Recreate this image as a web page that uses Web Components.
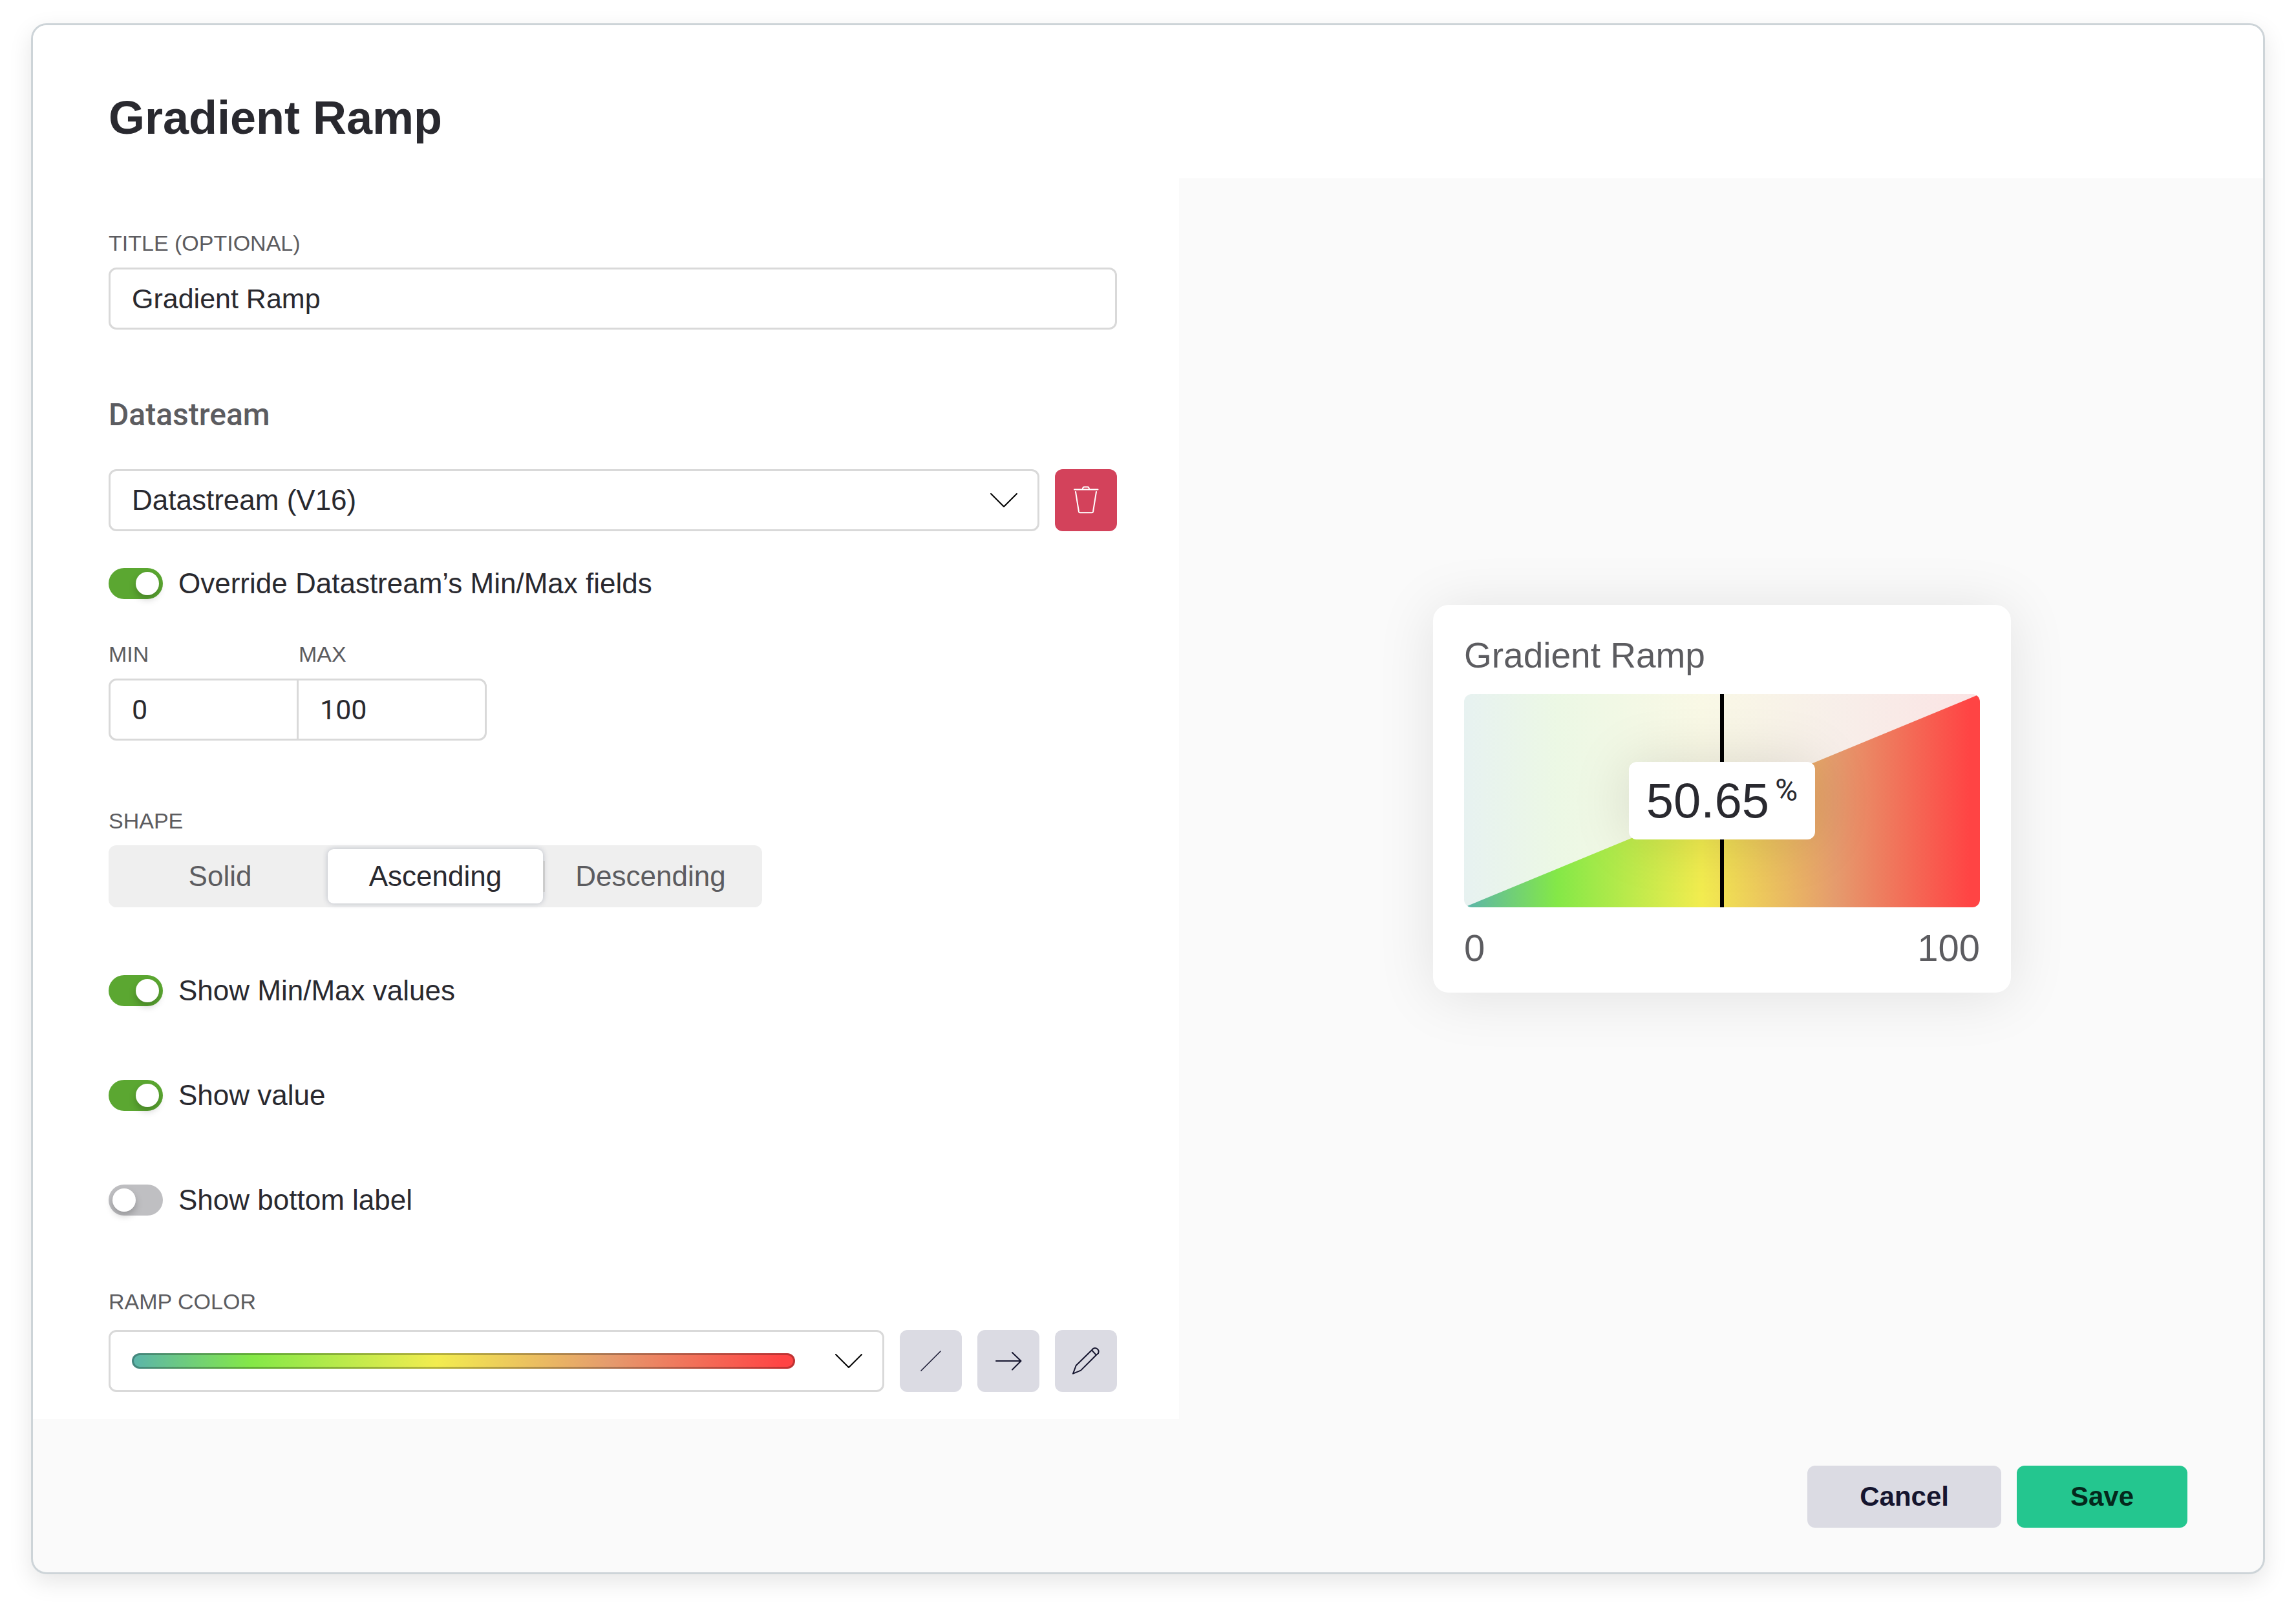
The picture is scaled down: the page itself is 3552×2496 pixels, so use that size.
<!DOCTYPE html>
<html lang="en">
<head>
<meta charset="utf-8">
<title>Gradient Ramp</title>
<style>
  html, body { height: 100%; }
  body {
    margin: 0;
    box-sizing: border-box;
    padding: 36px 48px 60px;
    background: #fff;
    color: #29292f;
    font-family: "Liberation Sans", Arial, sans-serif;
    font-size: 44px;
    line-height: 48px;
    --muted: #5c5c60;
    --line: #d9d9d9;
    --ramp: linear-gradient(90deg, #5bb4ab 0%, #84e847 18%, #f2ec4f 46%, #e59b6d 72%, #ff4444 98%);
  }
</style>
</head>
<body>
<settings-dialog heading="Gradient Ramp">
  <text-field slot="form" label="TITLE (OPTIONAL)" value="Gradient Ramp"></text-field>
  <datastream-section slot="form"></datastream-section>
  <segmented-control slot="form" label="SHAPE" options="Solid,Ascending,Descending" selected="1"></segmented-control>
  <toggle-list slot="form">
    <toggle-switch checked>Show Min/Max values</toggle-switch>
    <toggle-switch checked>Show value</toggle-switch>
    <toggle-switch>Show bottom label</toggle-switch>
  </toggle-list>
  <ramp-color slot="form" label="RAMP COLOR"></ramp-color>
  <ramp-widget slot="preview" heading="Gradient Ramp" value="50.65" unit="%" min="0" max="100"></ramp-widget>
  <action-button slot="actions" kind="secondary">Cancel</action-button>
  <action-button slot="actions" kind="primary">Save</action-button>
</settings-dialog>

<script>
const base = `
  *, *::before, *::after { box-sizing: border-box; }
  input, select, button { font: inherit; color: inherit; margin: 0; }
  .label { display: block; font-size: 34px; line-height: 44px; color: var(--muted); }
  .box { width: 100%; height: 96px; padding: 0 33px; border: 3px solid var(--line); border-radius: 12px; background: #fff; }
`;

function define(name, render) {
  customElements.define(name, class extends HTMLElement {
    connectedCallback() {
      if (this.shadowRoot) return;
      const root = this.attachShadow({ mode: 'open' });
      root.innerHTML = render(this);
    }
  });
}

const attr = (el, key) => el.getAttribute(key) || '';

define('settings-dialog', el => `
  <style>${base}
    :host { display: grid; grid-template: auto 1fr auto / 1773fr 1677fr; height: 100%; box-sizing: border-box;
      border: 3px solid #cdd4d8; border-radius: 24px; overflow: hidden; background: #fafafa;
      box-shadow: 0 12px 36px rgba(0,0,0,.1); }
    header { grid-column: 1 / -1; background: #fff; padding: 103px 117px 54px; }
    h1 { margin: 0; font-size: 72px; line-height: 80px; font-weight: 700; }
    .form { background: #fff; padding: 78px 96px 42px 117px; display: flex; flex-direction: column; }
    .preview { display: flex; align-items: center; justify-content: center; padding-left: 3px; }
    footer { grid-column: 1 / -1; display: flex; justify-content: flex-end; gap: 24px; padding: 72px 117px 69px; }
  </style>
  <header><h1>${attr(el, 'heading')}</h1></header>
  <main class="form"><slot name="form"></slot></main>
  <aside class="preview"><slot name="preview"></slot></aside>
  <footer><slot name="actions"></slot></footer>
`);

define('text-field', el => `
  <style>${base}
    :host { display: block; }
    .label { margin-bottom: 16px; }
    input { font-size: 43px; }
  </style>
  <label class="label" for="f">${attr(el, 'label')}</label>
  <input class="box" id="f" type="text" value="${attr(el, 'value')}">
`);

const icons = {
  chevron: '<path d="M4 14 24 34 44 14" stroke-width="2"/>',
  trash: '<path d="M6 7.500H42.500M18.500 7.500 19.500 4.500Q20.300 3.500 21.500 3.500H26.500Q27.700 3.500 28.300 4.500L29.500 7.500M8 11 13 42Q13.300 43.300 14.500 43.300H33.500Q34.700 43.300 35 42L40 11" stroke-width="2"/>',
  slash: '<path d="M9 39 39 9" stroke-width="1.500"/>',
  arrow: '<path d="M5 24H43M30 11 43.500 24 30 37.500" stroke-width="2"/>',
  pencil: '<path d="M4 43.700 8.700 31 33 7.300 35 5A5.600 5.600 0 0 1 43 12.200L39.700 15 16 38.600ZM33 7.300 39.700 14.600" stroke-width="2"/>'
};

define('line-icon', el => `
  <style>
    :host { display: block; width: 48px; height: 48px; flex: none; pointer-events: none; }
    svg { display: block; width: 100%; height: 100%; fill: none; stroke: currentColor; stroke-linecap: round; stroke-linejoin: round; }
  </style>
  <svg viewBox="0 0 48 48" aria-hidden="true">${icons[attr(el, 'name')]}</svg>
`);

define('icon-button', el => `
  <style>${base}
    :host { display: block; flex: none; }
    button { display: flex; align-items: center; justify-content: center; width: 96px; height: 96px; padding: 0;
      border: 0; border-radius: 12px; background: var(--bg, #dbdbe3); color: var(--fg, #15152f); }
  </style>
  <button type="button" aria-label="${attr(el, 'label')}"><line-icon name="${attr(el, 'icon')}"></line-icon></button>
`);

define('toggle-switch', el => `
  <style>${base}
    :host { display: block; }
    label { display: flex; align-items: center; gap: 24px; }
    input { appearance: none; flex: none; width: 84px; height: 48px; padding: 6px; border-radius: 24px; background: #bfbfc2; display: flex; }
    input::before { content: ""; width: 36px; height: 36px; border-radius: 50%; background: #fff; box-shadow: 0 6px 12px rgba(0,0,0,.22); }
    input:checked { background: #5ba731; justify-content: flex-end; }
  </style>
  <label><input type="checkbox" role="switch" ${el.hasAttribute('checked') ? 'checked' : ''}><span><slot></slot></span></label>
`);

define('toggle-list', () => `
  <style>
    :host { display: flex; flex-direction: column; gap: 114px; margin-top: 105px; }
  </style>
  <slot></slot>
`);

define('datastream-section', () => `
  <style>${base}
    :host { display: block; margin-top: 102px; }
    h2 { margin: 0 0 54px; font: 500 48px/60px Roboto, sans-serif; color: var(--muted); }
    .row { display: flex; gap: 24px; }
    .pick { flex: 1; display: grid; align-items: center; }
    .pick > * { grid-area: 1 / 1; }
    .pick line-icon { justify-self: end; margin-right: 31px; color: #000; }
    select { appearance: none; }
    icon-button { --bg: #d3425b; --fg: #fff; }
    toggle-switch { margin: 57px 0 63px; }
    .range { display: grid; grid-template-columns: 294px 291px; }
    .range .label { margin-bottom: 16px; }
    .range input { font-family: Roboto, sans-serif; font-size: 43px; }
    .low { border-radius: 12px 0 0 12px; }
    .high { width: 294px; justify-self: end; border-radius: 0 12px 12px 0; }
  </style>
  <h2>Datastream</h2>
  <div class="row">
    <div class="pick">
      <select class="box" aria-label="Datastream"><option>Datastream (V16)</option></select>
      <line-icon name="chevron"></line-icon>
    </div>
    <icon-button icon="trash" label="Delete"></icon-button>
  </div>
  <toggle-switch checked>Override Datastream’s Min/Max fields</toggle-switch>
  <div class="range">
    <label class="label" for="lo">MIN</label>
    <label class="label" for="hi">MAX</label>
    <input class="box low" id="lo" type="text" inputmode="numeric" value="0">
    <input class="box high" id="hi" type="text" inputmode="numeric" value="100">
  </div>
`);

define('segmented-control', el => {
  const selected = Number(attr(el, 'selected'));
  const items = attr(el, 'options').split(',').map((text, i) =>
    `<label><input type="radio" name="shape" ${i === selected ? 'checked' : ''}>${text}</label>`).join('');
  return `
  <style>${base}
    :host { display: block; margin-top: 102px; }
    fieldset { margin: 0; padding: 0; border: 0; }
    legend { padding: 0; margin-bottom: 16px; }
    .track { display: grid; grid-template-columns: repeat(3, 333px); width: fit-content; padding: 6px; border-radius: 12px; background: #efefef; }
    .track label { display: grid; place-items: center; height: 84px; border-radius: 9px; color: var(--muted); }
    .track label:has(:checked) { background: #fff; color: #29292f; box-shadow: 0 0 9px #b6bac4; }
    .track label:has(:checked) + label { background: linear-gradient(#ccc, #ccc) 0 50% / 3px 48px no-repeat; }
    input { appearance: none; position: absolute; }
  </style>
  <fieldset><legend class="label">${attr(el, 'label')}</legend><div class="track">${items}</div></fieldset>`;
});

define('ramp-color', el => `
  <style>${base}
    :host { display: block; margin-top: 111px; }
    .label { margin-bottom: 22px; }
    .row { display: flex; gap: 24px; }
    .box { flex: 1; display: flex; align-items: center; gap: 59px; padding-right: 28px; }
    .bar { flex: 1; height: 24px; border-radius: 12px; border: 3px solid rgba(0,0,0,.25); background: var(--ramp) border-box; }
    line-icon { color: #000; }
  </style>
  <span class="label" id="l">${attr(el, 'label')}</span>
  <div class="row">
    <button class="box" type="button" aria-labelledby="l"><span class="bar"></span><line-icon name="chevron"></line-icon></button>
    <icon-button icon="slash" label="Solid"></icon-button>
    <icon-button icon="arrow" label="Direction"></icon-button>
    <icon-button icon="pencil" label="Edit"></icon-button>
  </div>
`);

define('ramp-widget', el => `
  <style>${base}
    :host { display: block; box-sizing: border-box; width: 894px; padding: 48px 48px 36px; border-radius: 24px; background: #fff;
      box-shadow: 0 6px 90px rgba(0,0,0,.1); color: var(--muted); font-size: 55px; line-height: 60px; }
    h2 { margin: 0 0 30px; font: inherit; }
    .chart { display: grid; height: 330px; border-radius: 12px; overflow: hidden; place-items: center; background: #fafafa; }
    .chart > * { grid-area: 1 / 1; }
    .back, .fill { width: 100%; height: 100%; background: var(--ramp); }
    .back { opacity: .12; }
    .fill { clip-path: polygon(0 100%, 100% 0, 100% 100%); }
    .mark { z-index: 1; width: 6px; height: 100%; background: #000; }
    .value { z-index: 1; display: flex; justify-content: center; gap: 9px; width: 288px; height: 120px; padding-top: 20px; border-radius: 12px;
      background: #fff; color: #29292f; box-shadow: 0 0 90px rgba(0,0,0,.13); font-size: 76px; line-height: 80px; }
    .value sup { font: 48px/48px Roboto, sans-serif; vertical-align: baseline; }
    .scale { display: flex; justify-content: space-between; margin-top: 30px; font-size: 58px; line-height: 66px; }
  </style>
  <h2>${attr(el, 'heading')}</h2>
  <div class="chart">
    <div class="back"></div><div class="fill"></div><div class="mark"></div>
    <div class="value"><span>${attr(el, 'value')}</span><sup>${attr(el, 'unit')}</sup></div>
  </div>
  <div class="scale"><span>${attr(el, 'min')}</span><span>${attr(el, 'max')}</span></div>
`);

define('action-button', el => `
  <style>${base}
    :host { display: block; }
    button { min-width: 264px; height: 96px; padding: 0 81px; border: 0; border-radius: 12px; font-size: 42px; font-weight: 700; }
    .secondary { background: #dbdbe3; color: #15152f; }
    .primary { background: #24c68f; color: #04281c; }
  </style>
  <button type="button" class="${attr(el, 'kind')}"><slot></slot></button>
`);
</script>
</body>
</html>
